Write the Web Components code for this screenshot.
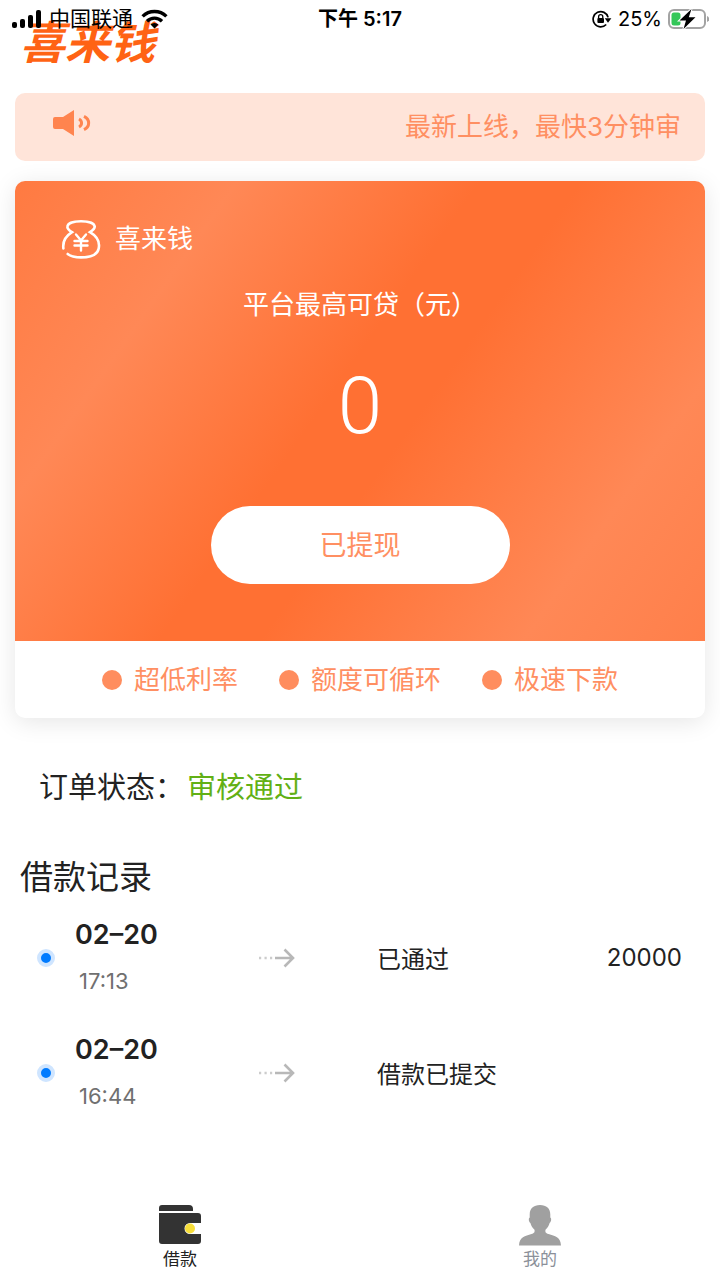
<!DOCTYPE html>
<html lang="zh-CN">
<head>
<meta charset="utf-8">
<meta name="viewport" content="width=device-width, initial-scale=1">
<title>喜来钱</title>
<style>
  body {
    margin: 0;
    background: #ffffff;
    color: #222222;
    font-family: Inter, "Noto Sans CJK SC", sans-serif;
    font-size: 26px;
  }
</style>
</head>
<body>
<loan-app>
  <status-bar slot="status" carrier="中国联通" time="下午 5:17" battery="25%"></status-bar>
  <brand-header>喜来钱</brand-header>
  <notice-bar>最新上线，最快3分钟审</notice-bar>
  <loan-card brand="喜来钱" label="平台最高可贷（元）" amount="0" action="已提现">
    <loan-feature slot="features">超低利率</loan-feature>
    <loan-feature slot="features">额度可循环</loan-feature>
    <loan-feature slot="features">极速下款</loan-feature>
  </loan-card>
  <order-status label="订单状态：">审核通过</order-status>
  <record-list heading="借款记录">
    <record-item date="02–20" time="17:13" amount="20000">已通过</record-item>
    <record-item date="02–20" time="16:44">借款已提交</record-item>
  </record-list>
  <tab-bar slot="tabs">
    <tab-item icon="wallet" href="#loan" active>借款</tab-item>
    <tab-item icon="user" href="#mine">我的</tab-item>
  </tab-bar>
</loan-app>

<script>
class LoanApp extends HTMLElement {
  constructor() {
    super();
    this.attachShadow({ mode: "open" });
  }

  connectedCallback() {
    this.shadowRoot.innerHTML = `
      <style>
        :host {
          display: flex;
          flex-direction: column;
          min-height: 100vh;
          position: relative;
        }

        /* The status bar floats over the page, as on the phone */
        .status {
          position: absolute;
          top: 0;
          left: 0;
          right: 0;
          z-index: 2;
        }

        main {
          flex: 1;
          padding: 0 15px;
        }
      </style>
      <div class="status"><slot name="status"></slot></div>
      <main><slot></slot></main>
      <slot name="tabs"></slot>
    `;
  }
}

class StatusBar extends HTMLElement {
  constructor() {
    super();
    this.attachShadow({ mode: "open" });
  }

  connectedCallback() {
    this.shadowRoot.innerHTML = `
      <style>
        :host {
          display: grid;
          grid-template-columns: 1fr auto 1fr;
          align-items: center;
          height: 37px;
          padding: 0 11px;
          color: #000000;
          font-size: 21px;
          line-height: 24px;
        }

        .side {
          display: flex;
          align-items: center;
          gap: 8px;
        }

        .right {
          justify-content: flex-end;
          gap: 6px;
        }

        .time {
          font-size: 20px;
          font-weight: 600;
        }

        .percent {
          font-size: 20px;
        }

        svg {
          display: block;
        }
      </style>
      <div class="side">
        <svg width="30" height="18" viewBox="0 0 30 18" fill="#000">
          <rect x="1" y="12" width="5" height="6" rx="2"/>
          <rect x="9" y="9" width="5" height="9" rx="2"/>
          <rect x="17" y="5" width="5" height="13" rx="2"/>
          <rect x="25" y="0" width="5" height="18" rx="2"/>
        </svg>
        <span>${this.getAttribute("carrier")}</span>
        <svg width="27" height="20" viewBox="0 0 27 20" fill="none" stroke="#000" stroke-width="3.4">
          <path d="M1.6 7.4a17 17 0 0 1 23.8 0"/>
          <path d="M6 12.2a10.8 10.8 0 0 1 15 0"/>
          <path d="M13.5 19.6 9.6 15.6a5.8 5.8 0 0 1 7.8 0z" fill="#000" stroke="none"/>
        </svg>
      </div>
      <div class="time">${this.getAttribute("time")}</div>
      <div class="side right">
        <svg width="20" height="18" viewBox="0 0 20 18">
          <path d="M14.2 14.5A7.6 7.6 0 1 1 16.1 7.4" fill="none" stroke="#000" stroke-width="1.7"/>
          <path d="M12.8 8.2h6.6l-3.4 4.6z" fill="#000"/>
          <path d="M6.6 8V6.7a2.1 2.1 0 0 1 4.2 0V8" fill="none" stroke="#000" stroke-width="1.3"/>
          <rect x="5.4" y="8" width="6.600" height="5" rx="1" fill="#000"/>
        </svg>
        <span class="percent">${this.getAttribute("battery")}</span>
        <svg width="41" height="22" viewBox="0 0 41 22">
          <rect x="1" y="2" width="36" height="18" rx="5" fill="none" stroke="#a3a3a3" stroke-width="2"/>
          <path d="M39 8c3 .8 3 5.200 0 6z" fill="#a3a3a3"/>
          <rect x="3.500" y="4.500" width="9" height="13" rx="2.500" fill="#34c759"/>
          <path d="M23.500 1 11.500 12.400h6.500L15.500 21l12-11.800h-6.700z" fill="#000" stroke="#fff" stroke-width="2" paint-order="stroke"/>
        </svg>
      </div>
    `;
  }
}

class BrandHeader extends HTMLElement {
  constructor() {
    super();
    this.attachShadow({ mode: "open" });
  }

  connectedCallback() {
    this.shadowRoot.innerHTML = `
      <style>
        :host {
          display: block;
          padding: 19px 5px 26px;
        }

        h1 {
          margin: 0;
          color: #ff6314;
          font-size: 45px;
          font-style: italic;
          font-weight: 700;
          line-height: 48px;
        }
      </style>
      <h1><slot></slot></h1>
    `;
  }
}

class NoticeBar extends HTMLElement {
  constructor() {
    super();
    this.attachShadow({ mode: "open" });
  }

  connectedCallback() {
    this.shadowRoot.innerHTML = `
      <style>
        :host {
          display: flex;
          align-items: center;
          justify-content: space-between;
          height: 68px;
          margin-bottom: 20px;
          padding: 0 24px 0 37px;
          border-radius: 10px;
          background: #ffe4d9;
          color: #ff8f62;
          line-height: 38px;
        }

        svg {
          display: block;
          margin-bottom: 8px;
        }
      </style>
      <svg width="40" height="26" viewBox="0 0 40 26">
        <path d="M3 7h8L22 0v26l-11-7H3a2 2 0 0 1-2-2V9a2 2 0 0 1 2-2z" fill="#ff844f"/>
        <path d="M27 9c3.400 1.800 3.400 6.200 0 8M32 6.300c6.200 3 6.200 10.400 0 13.400" fill="none" stroke="#ff844f" stroke-width="3"/>
      </svg>
      <span><slot></slot></span>
    `;
  }
}

class LoanCard extends HTMLElement {
  constructor() {
    super();
    this.attachShadow({ mode: "open" });
  }

  connectedCallback() {
    this.shadowRoot.innerHTML = `
      <style>
        :host {
          display: block;
          overflow: hidden;
          border-radius: 10px;
          background: #ffffff;
          box-shadow: 0 4px 24px rgba(0, 0, 0, 0.1);
        }

        .hero {
          display: flex;
          flex-direction: column;
          align-items: center;
          padding: 38px 46px 57px;
          background: linear-gradient(125deg, #ff7a41 0%, #ff8856 22%, #ff7033 46%, #ff7033 56%, #ff8856 82%, #ff7f4a 100%);
          color: #ffffff;
        }

        .brand {
          display: flex;
          align-items: center;
          align-self: stretch;
          gap: 14px;
          line-height: 40px;
        }

        .label {
          margin-top: 28px;
          line-height: 36px;
        }

        .amount {
          margin: 38px 0 55px;
          font-family: Roboto, Inter, sans-serif;
          font-size: 80px;
          font-weight: 350;
          line-height: 90px;
        }

        button {
          width: 50%;
          height: 78px;
          padding: 0 0 3px;
          border: 0;
          border-radius: 39px;
          background: #ffffff;
          color: #ff8f62;
          font: inherit;
          font-size: 27px;
          cursor: pointer;
        }

        .features {
          display: flex;
          justify-content: center;
          gap: 41px;
          padding: 20px 0;
          line-height: 37px;
        }
      </style>
      <div class="hero">
        <div class="brand">
          <svg width="40" height="40" viewBox="0 0 40 40" fill="none" stroke="#fff" stroke-width="2.600" stroke-linecap="round">
            <path d="M2.400 29.500C1.500 23 5 17 11 13.200 7.500 11 6 9.500 6.400 7.500 6.900 4 13 2.200 20 2.200S33.200 4 33.700 7.500c.3 2-1.300 3.500-4.700 5.700C35.500 17 39 23 37.700 29.500 36.500 36 29.500 38.400 20 38.400c-5.500 0-10.200-.9-13.300-3.400"/>
            <path d="m15 15.500 5 6 5-6M20 21.500v10M13.500 22h13M13.500 26.500h13" stroke-width="2.400"/>
          </svg>
          <span>${this.getAttribute("brand")}</span>
        </div>
        <div class="label">${this.getAttribute("label")}</div>
        <div class="amount">${this.getAttribute("amount")}</div>
        <button type="button">${this.getAttribute("action")}</button>
      </div>
      <div class="features"><slot name="features"></slot></div>
    `;
  }
}

class LoanFeature extends HTMLElement {
  constructor() {
    super();
    this.attachShadow({ mode: "open" });
  }

  connectedCallback() {
    this.shadowRoot.innerHTML = `
      <style>
        :host {
          display: flex;
          align-items: center;
          gap: 12px;
          color: #ff8f62;
        }

        :host::before {
          content: "";
          width: 20px;
          height: 20px;
          border-radius: 50%;
          background: #ff8d5e;
        }
      </style>
      <slot></slot>
    `;
  }
}

class OrderStatus extends HTMLElement {
  constructor() {
    super();
    this.attachShadow({ mode: "open" });
  }

  connectedCallback() {
    this.shadowRoot.innerHTML = `
      <style>
        :host {
          display: flex;
          gap: 3px;
          padding: 49px 24px 0;
          font-size: 29px;
          line-height: 42px;
        }

        .value {
          color: #62b015;
        }
      </style>
      <span>${this.getAttribute("label")}</span>
      <span class="value"><slot></slot></span>
    `;
  }
}

class RecordList extends HTMLElement {
  constructor() {
    super();
    this.attachShadow({ mode: "open" });
  }

  connectedCallback() {
    this.shadowRoot.innerHTML = `
      <style>
        :host {
          display: block;
          padding: 46px 0 0;
        }

        h2 {
          margin: 0 5px;
          font-size: 33px;
          font-weight: 400;
          line-height: 45px;
        }
      </style>
      <h2>${this.getAttribute("heading")}</h2>
      <div role="list"><slot></slot></div>
    `;
  }
}

class RecordItem extends HTMLElement {
  constructor() {
    super();
    this.attachShadow({ mode: "open" });
  }

  connectedCallback() {
    this.setAttribute("role", "listitem");
    this.shadowRoot.innerHTML = `
      <style>
        :host {
          display: grid;
          grid-template-columns: 38px 61fr 39fr 101fr;
          align-items: center;
          height: 115px;
          padding: 0 23px 0 22px;
          font-size: 24px;
        }

        .dot {
          box-sizing: border-box;
          width: 18px;
          height: 18px;
          border: 4px solid #cfe5ff;
          border-radius: 50%;
          background: #007bff;
        }

        .date {
          font-size: 27px;
          font-weight: 600;
          line-height: 46px;
        }

        .time {
          padding-left: 4px;
          color: #707070;
          font-size: 22px;
          line-height: 46px;
        }

        .result {
          display: flex;
          align-items: center;
          justify-content: space-between;
        }
      </style>
      <span class="dot"></span>
      <div>
        <div class="date">${this.getAttribute("date")}</div>
        <div class="time">${this.getAttribute("time")}</div>
      </div>
      <svg width="36" height="20" viewBox="0 0 36 20" fill="none" stroke="#b8b8b8" stroke-width="2.600">
        <path d="M0 10h2.200M5.500 10h2.200M11 10h2.200" stroke="#cccccc"/>
        <path d="M16 10h18M25.500 1.500 34 10l-8.500 8.500"/>
      </svg>
      <div class="result">
        <slot></slot>
        <span>${this.getAttribute("amount") || ""}</span>
      </div>
    `;
  }
}

class TabBar extends HTMLElement {
  constructor() {
    super();
    this.attachShadow({ mode: "open" });
  }

  connectedCallback() {
    this.shadowRoot.innerHTML = `
      <style>
        nav {
          display: grid;
          grid-template-columns: 1fr 1fr;
          padding: 10px 0 9px;
          background: #ffffff;
        }
      </style>
      <nav><slot></slot></nav>
    `;
  }
}

const TAB_ICONS = {
  wallet: `
    <path d="M3 0h27a4 4 0 0 1 4 4v2H0V3a3 3 0 0 1 3-3z" fill="#333"/>
    <path d="M0 8h39a3 3 0 0 1 3 3v7H31a5.500 5.500 0 0 0 0 11h11v7a3 3 0 0 1-3 3H3a3 3 0 0 1-3-3z" fill="#333"/>
    <circle cx="31" cy="23.500" r="5" fill="#f7de3a"/>`,
  user: `
    <path d="M21 0c6.500 0 10.300 3.500 10.300 9.500v3c1.500.8.900 4.500-.7 5.500-.8 3-2 5-4.100 6.700-.4 2.300 0 3.300 3 4.300C36 31 41.500 31.500 42 40.500H0C.5 31.500 6 31 12.500 29c3-1 3.400-2 3-4.300-2.100-1.700-3.300-3.700-4.100-6.700-1.600-1-2.200-4.700-.7-5.500v-3C10.700 3.500 14.500 0 21 0z" fill="#a0a0a0"/>`
};

class TabItem extends HTMLElement {
  constructor() {
    super();
    this.attachShadow({ mode: "open" });
  }

  connectedCallback() {
    this.shadowRoot.innerHTML = `
      <style>
        :host {
          display: block;
          color: #8b9099;
          font-size: 17px;
          line-height: 24px;
        }

        :host([active]) {
          color: #222222;
        }

        a {
          display: flex;
          flex-direction: column;
          align-items: center;
          color: inherit;
          text-decoration: none;
        }
      </style>
      <a href="${this.getAttribute("href")}">
        <svg width="42" height="42" viewBox="0 0 42 42">${TAB_ICONS[this.getAttribute("icon")]}</svg>
        <slot></slot>
      </a>
    `;
  }
}

customElements.define("loan-app", LoanApp);
customElements.define("status-bar", StatusBar);
customElements.define("brand-header", BrandHeader);
customElements.define("notice-bar", NoticeBar);
customElements.define("loan-card", LoanCard);
customElements.define("loan-feature", LoanFeature);
customElements.define("order-status", OrderStatus);
customElements.define("record-list", RecordList);
customElements.define("record-item", RecordItem);
customElements.define("tab-bar", TabBar);
customElements.define("tab-item", TabItem);
</script>
</body>
</html>
